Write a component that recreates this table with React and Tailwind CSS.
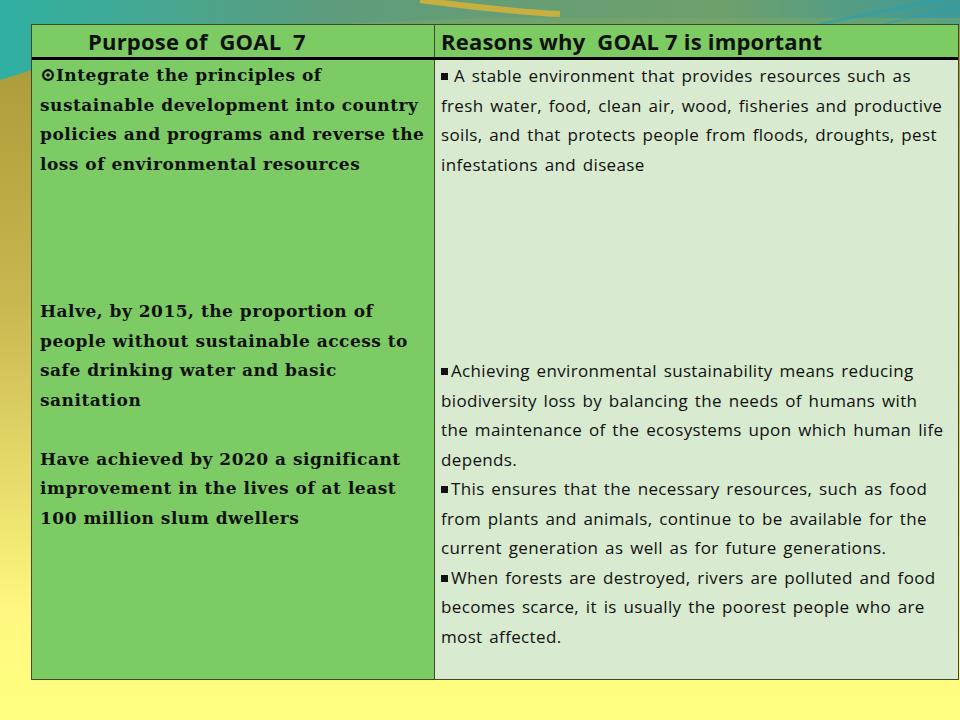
import React from "react";

const serif = { fontFamily: '"DejaVu Serif", "Liberation Serif", serif' };

const leftBlocks = [
  [
    "Integrate the principles of",
    "sustainable development into country",
    "policies and programs and reverse the",
    "loss of environmental  resources",
  ],
  [
    "Halve, by 2015, the proportion of",
    "people without sustainable access to",
    "safe drinking water and basic",
    "sanitation",
  ],
  [
    "Have achieved by 2020 a significant",
    "improvement in the lives of at least",
    "100 million slum dwellers",
  ],
];

const rightTop = [
  "A stable environment that provides resources such as",
  "fresh water, food, clean air, wood, fisheries and productive",
  "soils, and that protects people from floods, droughts, pest",
  "infestations and disease",
];

const rightBottom = [
  ["Achieving environmental sustainability means reducing", true],
  ["biodiversity loss by balancing the needs of humans with", false],
  ["the maintenance of the ecosystems upon which human life", false],
  ["depends.", false],
  ["This ensures that the necessary resources, such as food", true],
  ["from plants and animals, continue to be available for the", false],
  ["current generation as well as for future generations.", false],
  ["When forests are destroyed, rivers are polluted and food", true],
  ["becomes scarce, it is usually the poorest people who are", false],
  ["most affected.", false],
];

const Square = () => (
  <span className="inline-block w-[7px] h-[7px] bg-[#111] mr-[3px] align-[2px]" />
);

const Backdrop = () => (
  <svg
    className="absolute inset-0"
    width="960"
    height="720"
    viewBox="0 0 960 720"
  >
    <defs>
      <linearGradient id="top" x1="0" y1="0" x2="1" y2="0">
        <stop offset="0" stopColor="#2fb0a2" />
        <stop offset="0.35" stopColor="#5e9c7c" />
        <stop offset="0.75" stopColor="#6fa06c" />
        <stop offset="1" stopColor="#3c9a98" />
      </linearGradient>
      <linearGradient id="olive" x1="0" y1="0" x2="0" y2="1">
        <stop offset="0" stopColor="#a89838" />
        <stop offset="0.4" stopColor="#c8b850" />
        <stop offset="0.85" stopColor="#fff880" />
        <stop offset="1" stopColor="#ffff80" />
      </linearGradient>
    </defs>
    <rect width="960" height="720" fill="#ffff80" />
    <rect width="960" height="130" fill="url(#top)" />
    <path d="M0 84 C 120 40, 300 20, 520 18 L 960 18 L 960 130 L 0 130 Z" fill="#7aa868" opacity="0.5" />
    <path d="M0 80 C 60 60, 140 40, 260 28 L 960 28 L 960 720 L 0 720 Z" fill="url(#olive)" />
    <path d="M420 0 C 480 8, 520 12, 560 14" stroke="#c8b040" strokeWidth="6" fill="none" />
    <path d="M820 24 L 960 -4" stroke="#2aa0b0" strokeWidth="3" opacity="0.6" />
    <path d="M860 30 L 960 6" stroke="#2aa0b0" strokeWidth="2" opacity="0.5" />
  </svg>
);

export default function App() {
  return (
    <div className="relative w-[960px] h-[720px] overflow-hidden">
      <Backdrop />
      <div className="absolute left-[31px] top-[24px] w-[928px] h-[656px] flex flex-col border border-[#3d4a2c] text-[#111]">
        <div
          className="flex h-[35px] bg-[#7dcb63] border-b-[3px] border-black font-bold text-[22px] leading-[33px]"
          style={{ fontFamily: '"Open Sans", "Liberation Sans", sans-serif' }}
        >
          <div className="w-[403px] pl-[56px] border-r border-[#3d4a2c] tracking-[0.2px]">
            Purpose of&nbsp; GOAL&nbsp; 7
          </div>
          <div className="flex-1 pl-[6px] tracking-[0.2px]">
            Reasons why&nbsp; GOAL 7 is important
          </div>
        </div>
        <div className="flex flex-1">
          <div
            className="w-[403px] bg-[#7dcb64] border-r border-[#3d4a2c] pl-[8px] pt-[1px] font-bold text-[17px] leading-[29.5px] tracking-[0.5px] flex flex-col"
            style={serif}
          >
            {leftBlocks.map((block, i) => (
              <div
                key={i}
                className={i === 1 ? "mt-[118px]" : i === 2 ? "mt-[29.5px]" : ""}
              >
                {block.map((line, j) => (
                  <div key={line} className="whitespace-nowrap">
                    {i === 0 && j === 0 && (
                      <span className="text-[19px] leading-[0] tracking-normal">⊙</span>
                    )}
                    {line}
                  </div>
                ))}
              </div>
            ))}
          </div>
          <div
            className="flex-1 bg-[#d8ead0] pl-[6px] pt-[1px] text-[17px] leading-[29.5px] tracking-[0.35px] [word-spacing:2px]"
            style={{ fontFamily: '"Open Sans", Lato, sans-serif' }}
          >
            {rightTop.map((line, i) => (
              <div key={line} className="whitespace-nowrap">
                {i === 0 && (
                  <span className="inline-block w-[7px] h-[7px] bg-[#111] mr-[6px] align-[2px]" />
                )}
                {line}
              </div>
            ))}
            <div className="mt-[177px]">
              {rightBottom.map(([line, bullet]) => (
                <div key={line} className="whitespace-nowrap">
                  {bullet && <Square />}
                  {line}
                </div>
              ))}
            </div>
          </div>
        </div>
      </div>
    </div>
  );
}
